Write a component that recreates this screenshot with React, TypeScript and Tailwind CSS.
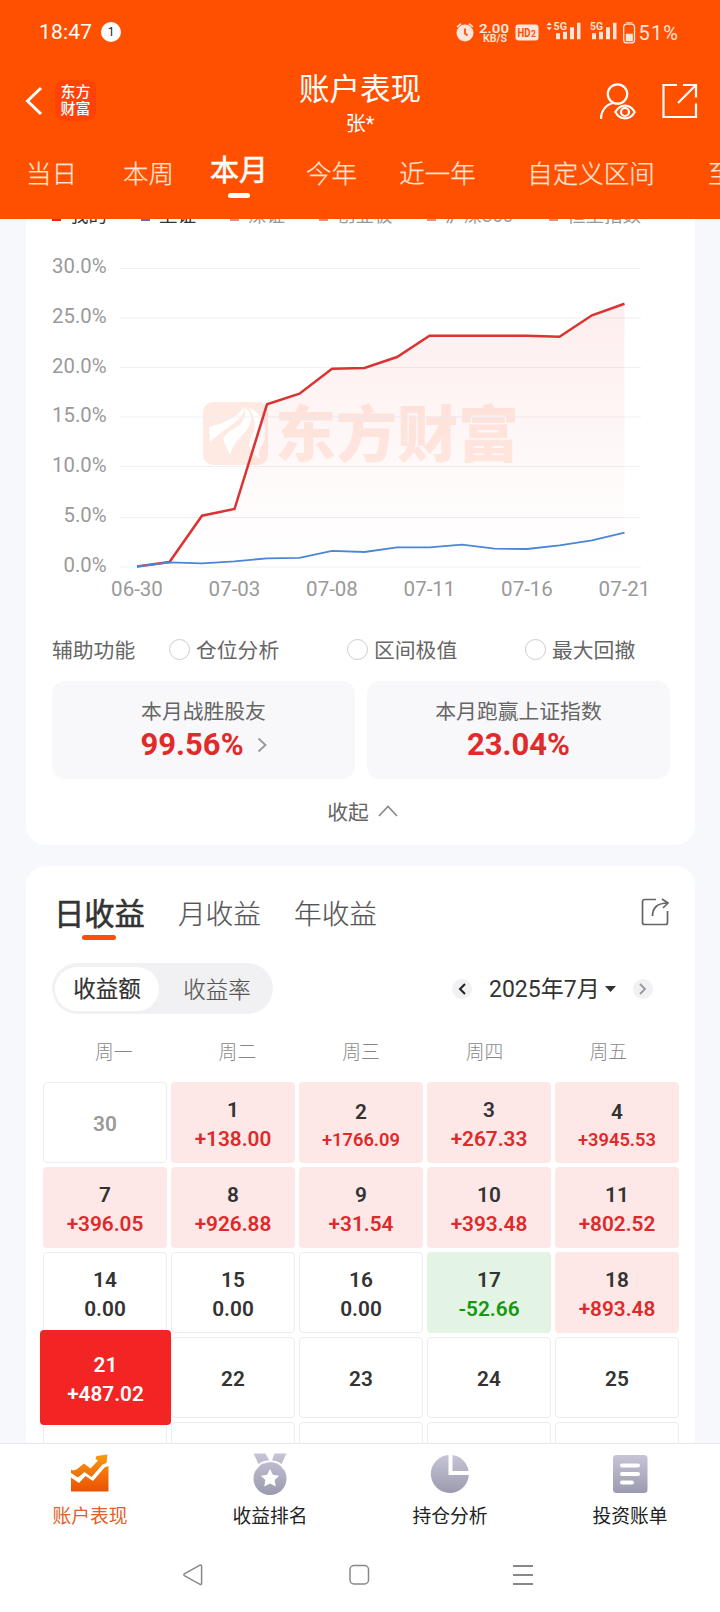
import React from "react";

const periods = [
  { label: "当日", cls: "ml-[26px] w-[51px]" },
  { label: "本周", cls: "ml-[46px] w-[51px]" },
  { label: "本月", cls: "ml-[36px] w-[58px]", active: true },
  { label: "今年", cls: "ml-[38px] w-[51px]" },
  { label: "近一年", cls: "ml-[42px] w-[77px]" },
  { label: "自定义区间", cls: "ml-[51px] w-[128px]" },
  { label: "至今", cls: "ml-[53px] w-[51px]" },
];

const legend = [
  { label: "我的", cls: "w-[89px] text-[#333]", bar: "bg-[#e8231b]" },
  { label: "上证", cls: "w-[89px] text-[#333]", bar: "bg-[#6a6ab8]" },
  { label: "深证", cls: "w-[89px] text-[#999]", bar: "bg-[#d98f86]" },
  { label: "创业板", cls: "w-[108px] text-[#999]", bar: "bg-[#e0907a]" },
  { label: "沪深300", cls: "w-[122px] text-[#999]", bar: "bg-[#dc9080]" },
  { label: "恒生指数", cls: "text-[#999]", bar: "bg-[#dc9080]" },
];

const yTicks = [
  { label: "30.0%", y: 49.5, base: 54 },
  { label: "25.0%", y: 99, base: 104 },
  { label: "20.0%", y: 148.5, base: 154 },
  { label: "15.0%", y: 198, base: 203.3 },
  { label: "10.0%", y: 247.5, base: 253.3 },
  { label: "5.0%", y: 298.5, base: 303.3 },
  { label: "0.0%", y: 348, base: 352.6 },
];
const xTicks = ["06-30", "07-03", "07-08", "07-11", "07-16", "07-21"];
const mine = [347.5, 343, 296.7, 290, 185.3, 174.7, 149.7, 149, 138, 116.7, 116.7, 116.7, 116.7, 117.8, 96.3, 84.7];
const index = [347.5, 343.3, 344.3, 342.3, 339.3, 338.8, 331.8, 333, 328.3, 328.3, 325.7, 329.7, 330, 326.3, 321.3, 313.7];
const toPoints = (ys: number[]) => ys.map((y, i) => `${(111 + i * 32.5).toFixed(1)},${y}`).join(" ");

type Tone = "plain" | "muted" | "up" | "down" | "today";
type Day = { d: string; v?: string; tone: Tone; small?: boolean };
const days: Day[] = [
  { d: "30", tone: "muted" },
  { d: "1", v: "+138.00", tone: "up" },
  { d: "2", v: "+1766.09", tone: "up", small: true },
  { d: "3", v: "+267.33", tone: "up" },
  { d: "4", v: "+3945.53", tone: "up", small: true },
  { d: "7", v: "+396.05", tone: "up" },
  { d: "8", v: "+926.88", tone: "up" },
  { d: "9", v: "+31.54", tone: "up" },
  { d: "10", v: "+393.48", tone: "up" },
  { d: "11", v: "+802.52", tone: "up" },
  { d: "14", v: "0.00", tone: "plain" },
  { d: "15", v: "0.00", tone: "plain" },
  { d: "16", v: "0.00", tone: "plain" },
  { d: "17", v: "-52.66", tone: "down" },
  { d: "18", v: "+893.48", tone: "up" },
  { d: "21", v: "+487.02", tone: "today" },
  { d: "22", tone: "plain" },
  { d: "23", tone: "plain" },
  { d: "24", tone: "plain" },
  { d: "25", tone: "plain" },
  { d: "", tone: "plain" },
  { d: "", tone: "plain" },
  { d: "", tone: "plain" },
  { d: "", tone: "plain" },
  { d: "", tone: "plain" },
];
const cellTone: Record<Tone, string> = {
  plain: "border border-[#ececee] bg-white text-[#333]",
  muted: "border border-[#ececee] bg-white text-[#999]",
  up: "bg-[#fde8e7] text-[#333]",
  down: "bg-[#e3f4e4] text-[#333]",
  today: "relative text-white",
};
const valueTone: Record<Tone, string> = {
  plain: "text-[#333]",
  muted: "text-[#999]",
  up: "text-[#dd2a2a]",
  down: "text-[#12990f]",
  today: "text-white",
};

function StatusBar() {
  return (
    <div className="flex h-[64px] items-center pl-[39px] text-white">
      <span className="w-[62px] text-[21px] leading-none tracking-[0.2px]">18:47</span>
      <span className="flex size-5 items-center justify-center rounded-full bg-white text-[12px] leading-none text-[#222]">1</span>
      <svg className="ml-[334px]" width="226" height="26" viewBox="0 0 226 26" fill="#ffe6dc">
        <g transform="translate(1,3.5)">
          <circle cx="9" cy="10.5" r="8.5" />
          <path d="M1 4.5 5 1.2M17 4.5 13 1.2" stroke="#ffe6dc" strokeWidth="1.6" />
          <path d="M9 6v5l2.6 2" stroke="#ff5000" strokeWidth="1.8" fill="none" />
        </g>
        <text x="24" y="13.500" fontSize="13.5" fontWeight="600" textLength="30" lengthAdjust="spacingAndGlyphs">2.00</text>
        <text x="28" y="22.500" fontSize="11" fontWeight="600" textLength="24" lengthAdjust="spacingAndGlyphs">KB/S</text>
        <rect x="60.500" y="5.500" width="23" height="16" rx="3" />
        <text x="62.500" y="18" fontSize="12.5" fontWeight="700" fill="#ff5000" textLength="13" lengthAdjust="spacingAndGlyphs">HD</text>
        <text x="76" y="18" fontSize="8.5" fontWeight="700" fill="#ff5000" textLength="5.500">2</text>
        <g transform="translate(0,-0.8)">
          <path d="m91.500 7 2.700-3 2.700 3zM91.500 9l2.700 3 2.700-3z" />
          <text x="98.500" y="12" fontSize="11.5" fontWeight="600" textLength="13.500" lengthAdjust="spacingAndGlyphs">5G</text>
          <path d="M101 15h4v6h-4zM108 13.500h4V21h-4zM115 9h4v12h-4zM122 4.500h3.500V21H122z" />
          <text x="135" y="12" fontSize="11.5" fontWeight="600" textLength="13" lengthAdjust="spacingAndGlyphs">5G</text>
          <path d="M137 15h4v6h-4zM144 13.500h4V21h-4zM151 9h4v12h-4zM158 4.500h3.500V21H158z" />
          <rect x="168.700" y="6" width="10.800" height="18.700" rx="3" fill="none" stroke="#ffe6dc" strokeWidth="1.300" />
          <path d="M171 4h6.500v1H171zM170.800 15.500h7v7.500h-7z" />
        </g>
        <text x="183.500" y="20.700" fontSize="20" textLength="39.500">51%</text>
      </svg>
    </div>
  );
}

function Header() {
  return (
    <header className="h-[219px] shrink-0 overflow-hidden bg-[#ff5000] text-white">
      <StatusBar />
      <div className="flex h-[76px] items-start">
        <div className="flex w-[200px] items-center pt-[16px] pl-[25px]">
          <svg width="18" height="30" viewBox="0 0 18 30" fill="none" stroke="#fff" strokeWidth="3">
            <path d="M16 2 2.500 15 16 28" />
          </svg>
          <div className="ml-[12px] flex size-[41px] flex-col items-center justify-center rounded-[9px] bg-[#ff4206] pt-px text-[15px] leading-[17px] font-medium">
            <span>东方</span>
            <span>财富</span>
          </div>
        </div>
        <div className="flex flex-1 flex-col items-center">
          <h1 className="mt-[6px] text-[30.5px] leading-[40px] font-normal">账户表现</h1>
          <span className="mt-px text-[20px] leading-[26px]">张*</span>
        </div>
        <div className="flex w-[200px] justify-end pt-[18px] pr-[22px]">
          <svg width="40" height="40" viewBox="0 0 40 40" fill="none" stroke="#fff" strokeWidth="2.200">
            <circle cx="19.500" cy="12" r="9.700" />
            <path d="M3 37C3 29 8 22 16 21" />
            <path d="M17.300 30c5-8.600 14.600-8.600 19.400 0-4.800 8.600-14.400 8.600-19.400 0Z" />
            <circle cx="27" cy="30" r="4" />
          </svg>
          <svg className="ml-[22px]" width="38" height="38" viewBox="0 0 38 38" fill="none" stroke="#fff" strokeWidth="2.200">
            <path d="M17 3H3.500v32H36V21.500M23 3h13v12.500M36 3 18 21" />
          </svg>
        </div>
      </div>
      <nav className="flex h-[79px] w-[800px]">
        {periods.map((p) => (
          <div key={p.label} className={`${p.cls} flex shrink-0 flex-col items-center whitespace-nowrap`}>
            {p.active ? (
              <>
                <span className="mt-[10px] text-[29px] leading-[43px] [-webkit-text-stroke:0.6px_#fff]">{p.label}</span>
                <i className="block h-[5px] w-[22px] rounded-full bg-white" />
              </>
            ) : (
              <span className="mt-[16px] text-[25.5px] leading-[36px] font-light text-[#ffe4d6] [-webkit-text-stroke:0.25px_#ffe4d6]">{p.label}</span>
            )}
          </div>
        ))}
      </nav>
    </header>
  );
}

function Chart() {
  return (
    <svg className="block" width="669" height="391" viewBox="0 0 669 391">
      <defs>
        <linearGradient id="area" x1="0" y1="84" x2="0" y2="348" gradientUnits="userSpaceOnUse">
          <stop offset="0" stopColor="#f04040" stopOpacity="0.09" />
          <stop offset="0.85" stopColor="#f04040" stopOpacity="0.01" />
          <stop offset="1" stopColor="#f04040" stopOpacity="0" />
        </linearGradient>
      </defs>
      <g opacity="0.13">
        <rect x="177" y="183" width="65" height="63" rx="10" fill="#ff5f28" />
        <text x="249" y="238" fontSize="61" fontWeight="900" fill="#ff6a30" textLength="244">东方财富</text>
      </g>
      <g fill="#fff">
        <path d="M183 208c14-4 27-8 35-20 2 12-17 19-34 35z" />
        <path d="M219 188c1 15-5 18-13 23-7 4-10 8-8 12l6 13c3-15 18-21 21-34 1-6-2-10-6-14Z" />
        <path d="M223 189c12 5 18 16 16 29 0 8-9 11-5 22-9-5-13-14-9-21 5-8 6-18-2-30Z" />
      </g>
      {yTicks.map((t) => (
        <g key={t.label}>
          <path d={`M94 ${t.y}h521`} stroke="#eef0f4" strokeWidth="1.200" />
          <text x="80.500" y={t.base} textAnchor="end" fontSize="20.3" fill="#999">
            {t.label}
          </text>
        </g>
      ))}
      <polygon points={`111,348 ${toPoints(mine)} 598.5,348`} fill="url(#area)" />
      <polyline points={toPoints(mine)} fill="none" stroke="#dc3232" strokeWidth="2.500" />
      <polyline points={toPoints(index)} fill="none" stroke="#4a86d8" strokeWidth="1.800" />
      {xTicks.map((t, i) => (
        <text key={t} x={111 + i * 97.5} y="377" textAnchor="middle" fontSize="20.5" fill="#999">
          {t}
        </text>
      ))}
    </svg>
  );
}

function Option({ label, cls }: { label: string; cls: string }) {
  return (
    <div className={`flex items-center ${cls}`}>
      <i className="mb-[4px] block size-[21px] rounded-full border-[1.5px] border-[#ccc]" />
      <span className="ml-[6px]">{label}</span>
    </div>
  );
}

function PerformanceCard() {
  return (
    <section className="h-[626px] w-[669px] shrink-0 overflow-hidden rounded-b-[20px] bg-white">
      <div className="-mt-[19px] flex h-[32px] items-center pl-[26px] text-[18.5px] leading-none">
        {legend.map((l) => (
          <div key={l.label} className={`${l.cls} flex shrink-0 items-center whitespace-nowrap`}>
            <i className={`mt-[6px] mr-[9px] block h-[3px] w-[9px] ${l.bar}`} />
            {l.label}
          </div>
        ))}
      </div>
      <div className="-mt-[13px]">
        <Chart />
      </div>
      <div className="mt-[23px] flex h-[36px] items-center pl-[26px] text-[20.8px] leading-none whitespace-nowrap text-[#666]">
        <span className="w-[117px]">辅助功能</span>
        <Option label="仓位分析" cls="w-[178px]" />
        <Option label="区间极值" cls="w-[178px]" />
        <Option label="最大回撤" cls="" />
      </div>
      <div className="mt-[12px] flex justify-between pr-[25px] pl-[26px]">
        <div className="flex h-[98px] w-[303px] flex-col items-center rounded-[13px] bg-[#f8f8fa] pt-[18px]">
          <span className="text-[20.8px] leading-[26px] text-[#666]">本月战胜股友</span>
          <div className="flex w-[126px] items-center justify-between">
            <b className="text-[31px] leading-[40px] text-[#e12b2b]">99.56%</b>
            <svg width="10" height="16" viewBox="0 0 10 16" fill="none" stroke="#999" strokeWidth="1.800">
              <path d="m1.500 1.500 7 6.500-7 6.500" />
            </svg>
          </div>
        </div>
        <div className="flex h-[98px] w-[303px] flex-col items-center rounded-[13px] bg-[#f8f8fa] pt-[18px]">
          <span className="text-[20.8px] leading-[26px] text-[#666]">本月跑赢上证指数</span>
          <b className="text-[31px] leading-[40px] text-[#e12b2b]">23.04%</b>
        </div>
      </div>
      <div className="mt-[19px] flex h-[30px] items-center justify-center gap-[9px] pl-[4px] text-[20.8px] leading-none text-[#666]">
        收起
        <svg className="mb-[4px]" width="20" height="12" viewBox="0 0 20 12" fill="none" stroke="#888" strokeWidth="1.600">
          <path d="M1 11 10 1.500 19 11" />
        </svg>
      </div>
    </section>
  );
}

function DayCell({ day }: { day: Day }) {
  const text = (
    <>
      <span className={day.v ? (day.small ? "leading-[26px]" : "leading-[29px]") : "pt-[3px] leading-[29px]"}>{day.d}</span>
      {day.v && (
        <span className={`${valueTone[day.tone]} leading-[29px] ${day.small ? "text-[18.3px]" : ""}`}>{day.v}</span>
      )}
    </>
  );
  const shift = day.small ? "pt-[7px]" : day.v && day.tone !== "today" ? "pt-[4px]" : "";
  return (
    <div className={`flex h-[81px] flex-col items-center justify-center rounded-[4px] text-[20.8px] font-semibold ${shift} ${cellTone[day.tone]}`}>
      {day.tone === "today" ? (
        <div className="absolute -top-[7px] -right-[4px] -bottom-[7px] -left-[3px] flex flex-col items-center justify-center rounded-[4px] bg-[#f32424] pt-[4px]">
          {text}
        </div>
      ) : (
        text
      )}
    </div>
  );
}

function CalendarCard() {
  return (
    <section className="mt-[21px] h-[640px] w-[669px] shrink-0 rounded-t-[20px] bg-white">
      <div className="flex h-[97px] items-start pl-[28px] whitespace-nowrap">
        <div className="flex flex-col items-center pt-[28px]">
          <span className="text-[30.3px] leading-[41px] text-[#333] [-webkit-text-stroke:0.6px_#333]">日收益</span>
          <i className="block h-[5px] w-[34px] rounded-full bg-[#fb5008]" />
        </div>
        <span className="mt-[28px] ml-[33px] text-[27.7px] leading-[42px] font-light text-[#555] [-webkit-text-stroke:0.2px_#555]">月收益</span>
        <span className="mt-[28px] ml-[33px] text-[27.7px] leading-[42px] font-light text-[#555] [-webkit-text-stroke:0.2px_#555]">年收益</span>
        <svg className="mt-[31px] ml-[263px]" width="30" height="30" viewBox="0 0 30 30" fill="none" stroke="#666" strokeWidth="1.700">
          <path d="M16 2.500H4.500a2 2 0 0 0-2 2v21a2 2 0 0 0 2 2h21a2 2 0 0 0 2-2V14" />
          <path d="M12.500 19C12.500 11 17 6 28 6M22 2l6 4-5 5" />
        </svg>
      </div>
      <div className="flex h-[51px] items-center pl-[26px]">
        <div className="flex h-[51px] w-[221px] items-center rounded-full bg-[#f1f1f4] p-[3px] text-[22.5px] leading-none">
          <span className="flex h-[44px] w-[104px] items-center justify-center rounded-full bg-white pt-px text-[#333] [-webkit-text-stroke:0.2px_#333]">收益额</span>
          <span className="flex flex-1 items-center justify-center pt-[3px] pl-[5px] font-light text-[#555] [-webkit-text-stroke:0.2px_#555]">收益率</span>
        </div>
        <div className="ml-[179px] flex items-center">
          <span className="flex size-[20px] items-center justify-center rounded-full bg-[#f1f1f4]">
            <svg width="8" height="12" viewBox="0 0 8 12" fill="none" stroke="#222" strokeWidth="2">
              <path d="M7 1 2 6l5 5" />
            </svg>
          </span>
          <span className="ml-[17px] w-[112px] pt-px text-[23px] leading-none whitespace-nowrap text-[#333]">2025年7月</span>
          <svg className="ml-[4px]" width="11" height="6" viewBox="0 0 11 6" fill="#333">
            <path d="M0 0h11L5.500 6z" />
          </svg>
          <span className="ml-[17px] flex size-[20px] items-center justify-center rounded-full bg-[#f1f1f4]">
            <svg width="8" height="12" viewBox="0 0 8 12" fill="none" stroke="#999" strokeWidth="1.800">
              <path d="m1 1 5 5-5 5" />
            </svg>
          </span>
        </div>
      </div>
      <div className="mt-[23px] ml-[26px] grid h-[32px] w-[618px] grid-cols-5 items-center text-center text-[18.8px] leading-none font-light text-[#888]">
        {["周一", "周二", "周三", "周四", "周五"].map((w) => (
          <span key={w}>{w}</span>
        ))}
      </div>
      <div className="mt-[13px] ml-[17px] grid w-[636px] grid-cols-5 gap-1">
        {days.map((d, i) => (
          <DayCell key={i} day={d} />
        ))}
      </div>
    </section>
  );
}

const tabs = ["账户表现", "收益排名", "持仓分析", "投资账单"];

function TabIcon({ i }: { i: number }) {
  return (
    <svg width="44" height="44" viewBox="0 0 44 44">
      <defs>
        <linearGradient id={`tab${i}`} x1="0" y1="0" x2="0" y2="1">
          <stop offset="0" stopColor={i === 0 ? "#f99a10" : "#c6c4d6"} />
          <stop offset="1" stopColor={i === 0 ? "#ec5002" : "#9c9aae"} />
        </linearGradient>
      </defs>
      <g fill={`url(#tab${i})`}>
        {i === 0 && (
          <path d="M3 17.500 5 18.500 8.500 17.500 16 11.500l6.500 5L30 8.500 27.500 7 28.500 4 39.500 2.500 38.500 11 34.500 12.500 23.500 25l-7-5L10 25.500 3 21zM3 25.500l8 5.500 6.500-7 7.500 5L36.500 15.500 40.500 14V39.500H3z" />
        )}
        {i === 1 && (
          <path d="M5.500 1.500h12L22 10 11 13zM26.500 1.500h12L33 13l-9.500-3zM22 10a16.500 16.500 0 1 0 .01 0zM22 17l2.900 5.700 6.300 1-4.600 4.400 1.200 6.400-5.800-3-5.800 3 1.200-6.400-4.600-4.400 6.300-1z" fillRule="evenodd" />
        )}
        {i === 2 && <path d="M20.500 3V23h20.300A19 19 0 1 1 20.500 3zM24.500 3A19 19 0 0 1 40.500 19H24.500z" />}
        {i === 3 && <rect x="5" y="3" width="34.500" height="38" rx="3.500" />}
      </g>
      {i === 3 && <path d="M14 13.500h16M14 22h16M14 30.500h10" stroke="#fff" strokeWidth="4" strokeLinecap="round" />}
      {i === 1 && <path d="M8 17C13 6.500 31 6.500 36 17" fill="none" stroke="#fff" strokeWidth="1.800" />}
    </svg>
  );
}

function BottomBar() {
  return (
    <footer className="h-[169px] shrink-0 border-t border-[#e8e8ea] bg-white">
      <div className="grid grid-cols-4">
        {tabs.map((t, i) => (
          <div key={t} className={`flex flex-col items-center pt-[8px] text-[18.8px] leading-[28px] ${i === 0 ? "text-[#e0602a]" : "text-[#222]"}`}>
            <TabIcon i={i} />
            <span className="mt-[7px]">{t}</span>
          </div>
        ))}
      </div>
      <div className="mt-[33px] flex pl-[182px]">
        <svg width="380" height="22" viewBox="0 0 380 22" fill="none" stroke="#888" strokeWidth="1.500">
          <path d="M18 1.200 2.700 9.600q-1.700 1.100 0 2.200L18 20.300q1.600.600 1.600-1.200V2.400q0-1.700-1.600-1.200Z" />
          <rect x="168" y="1.500" width="18.500" height="18.500" rx="4" />
          <path d="M331 2h20M331 11h20M331 20h20" strokeWidth="1.800" />
        </svg>
      </div>
    </footer>
  );
}

export default function App() {
  return (
    <div className="flex h-[1612px] w-[720px] flex-col overflow-hidden bg-[#f6f8fb] font-[Roboto,'Noto_Sans_CJK_SC',sans-serif]">
      <Header />
      <main className="flex h-[1224px] shrink-0 flex-col overflow-hidden pl-[26px]">
        <PerformanceCard />
        <CalendarCard />
      </main>
      <BottomBar />
    </div>
  );
}
